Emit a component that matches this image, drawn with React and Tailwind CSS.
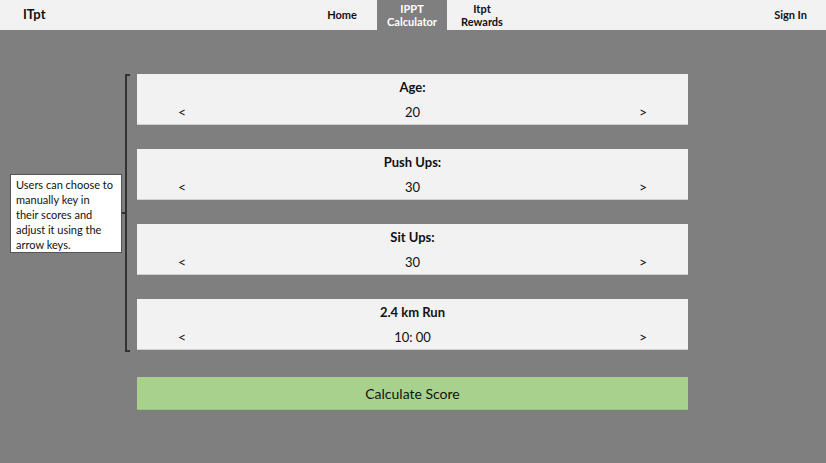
export default function App() {
  const cards = [
    { label: "Age:", value: "20" },
    { label: "Push Ups:", value: "30" },
    { label: "Sit Ups:", value: "30" },
    { label: "2.4 km Run", value: "10: 00" },
  ];
  return (
    <div className="w-[826px] h-[463px] bg-[#7f7f7f] relative overflow-hidden" style={{ fontFamily: "Lato, 'Open Sans', sans-serif" }}>
      <nav className="h-[30px] bg-[#f2f2f2] flex items-center justify-between relative">
        <div className="pl-[23px] text-[13px] font-bold text-[#111]">ITpt</div>
        <div className="absolute left-[307px] top-0 flex h-[30px]">
          <div className="w-[70px] flex items-center justify-center text-[11px] font-bold text-[#111]">Home</div>
          <div className="w-[70px] bg-[#7f7f7f] flex flex-col items-center justify-center text-[11px] font-bold text-white leading-[13px]">
            <span>IPPT</span>
            <span>Calculator</span>
          </div>
          <div className="w-[70px] flex flex-col items-center justify-center text-[11px] font-bold text-[#111] leading-[13px]">
            <span>Itpt</span>
            <span>Rewards</span>
          </div>
        </div>
        <div className="pr-[19px] text-[11px] font-bold text-[#111]">Sign In</div>
      </nav>

      <main className="w-[551px] ml-[137px] pt-[44px] flex flex-col gap-[25px]">
        {cards.map((c) => (
          <div key={c.label} className="h-[51px] bg-[#f2f2f2] border-b border-[#d0d0d0] flex flex-col text-[#111] -mb-[1px]">
            <div className="pt-[4px] text-center text-[13px] font-bold leading-[18px]">{c.label}</div>
            <div className="flex items-center justify-between pt-[7px] text-[13px] leading-[18px]">
              <span className="pl-[41px] text-[14px]">&lt;</span>
              <span>{c.value}</span>
              <span className="pr-[41px] text-[14px]">&gt;</span>
            </div>
          </div>
        ))}
        <div className="mt-[3px] h-[33px] bg-[#a9d18e] border-b border-[#9cbf84] flex items-center justify-center text-[14px] text-[#111]">
          Calculate Score
        </div>
      </main>

      <div className="absolute left-[125px] top-[74px] w-[5px] h-[278px] border-l-2 border-t-2 border-b-2 border-[#333]" />
      <div className="absolute left-[121px] top-[212px] w-[5px] h-[2px] bg-[#333]" />
      <div className="absolute left-[10px] top-[174px] w-[112px] h-[79px] bg-white border border-[#555] px-[5px] pt-[2px] text-[11px] leading-[15px] text-[#111]">
        Users can choose to<br />manually key in<br />their scores and<br />adjust it using the<br />arrow keys.
      </div>
    </div>
  );
}
